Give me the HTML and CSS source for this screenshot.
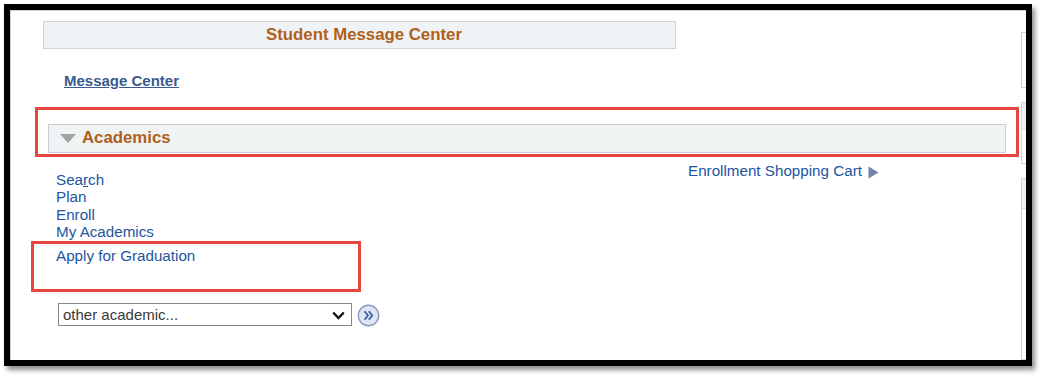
FILE: index.html
```html
<!DOCTYPE html>
<html lang="en">
<head>
<meta charset="utf-8">
<title>Student Center</title>
<link rel="stylesheet" href="styles.css">
</head>
<body>
<div class="frame">
  <div class="page">
    <div class="main">
      <div class="title-bar"><span>Student Message Center</span></div>
      <a class="msg-link" href="#">Message Center</a>
      <div class="acad-bar">
        <span class="tri-down"></span>
        <span class="acad-title">Academics</span>
      </div>
      <div class="acad-body">
        <div class="left-col">
          <ul class="links">
            <li><a href="#">Sea<u>r</u>ch</a></li>
            <li><a href="#">Plan</a></li>
            <li><a href="#">Enroll</a></li>
            <li><a href="#">My Academics</a></li>
          </ul>
          <a class="apply" href="#">Apply for Graduation</a>
          <div class="select-row">
            <div class="select-wrap">
              <select class="other"><option>other academic...</option></select>
              <svg class="chev" width="13" height="9" viewBox="0 0 13 9"><path d="M1.2 1.5 L6.5 7 L11.8 1.5" fill="none" stroke="#111" stroke-width="2.4" stroke-linejoin="miter"/></svg>
            </div>
            <svg class="go" width="23" height="23" viewBox="0 0 23 23">
              <circle cx="11.5" cy="11.5" r="10.2" fill="#dfe5f3" stroke="#8d9cc4" stroke-width="1.4"/>
              <path d="M7.6 7.2 L11 11.5 L7.6 15.8 M11.8 7.2 L15.2 11.5 L11.8 15.8" fill="none" stroke="#3557a5" stroke-width="1.7"/>
            </svg>
          </div>
        </div>
        <div class="right-col">
          <a class="cart" href="#">Enrollment Shopping Cart</a>
          <svg class="tri-right" width="11" height="13" viewBox="0 0 11 13"><path d="M0.5 0.5 L10.5 6.5 L0.5 12.5 Z" fill="#6f86ab"/></svg>
        </div>
      </div>
    </div>
    <div class="side">
      <div class="panel p1"></div>
      <div class="panel p2"><div class="ph h2"></div></div>
      <div class="panel p3"><div class="ph h3"></div></div>
    </div>
  </div>
  <div class="mark mark-acad"></div>
  <div class="mark mark-grad"></div>
</div>
</body>
</html>
```

FILE: styles.css
```css
html, body {
  margin: 0;
  padding: 0;
  background: #ffffff;
}
body {
  font-family: "Liberation Sans", Arial, sans-serif;
  width: 1045px;
  height: 379px;
  overflow: hidden;
}
.frame {
  position: relative;
  box-sizing: border-box;
  width: 1028px;
  height: 362px;
  margin: 4px 0 0 4px;
  border: 6px solid #000;
  background: #fff;
  box-shadow: 3px 4px 5px rgba(0, 0, 0, 0.45);
  overflow: hidden;
}
.page {
  box-sizing: border-box;
  height: 100%;
  border-top: 1px solid #cfcfcf;
  border-left: 1px solid #cfcfcf;
  display: flex;
}
.main {
  width: 1010px;
  flex: none;
  display: flex;
  flex-direction: column;
  align-items: flex-start;
}
.title-bar {
  box-sizing: border-box;
  margin: 10px 0 0 32px;
  width: 633px;
  height: 28px;
  background: #f0f3f5;
  border: 1px solid #cdd3da;
  display: flex;
  align-items: center;
  justify-content: center;
  padding-left: 9px;
  padding-bottom: 1px;
  color: #b0601a;
  font-weight: bold;
  font-size: 16.8px;
}
.msg-link {
  margin: 23px 0 0 53px;
  font-size: 15px;
  line-height: 18px;
  font-weight: bold;
  color: #3a5b8e;
  text-decoration: underline;
}
.acad-bar {
  box-sizing: border-box;
  margin: 34px 0 0 37px;
  width: 958px;
  height: 29px;
  background: #eff3f4;
  border: 1px solid #c9ced4;
  display: flex;
  align-items: center;
  padding-left: 11px;
  padding-bottom: 1px;
}
.tri-down {
  width: 0;
  height: 0;
  border-left: 8px solid transparent;
  border-right: 8px solid transparent;
  border-top: 9px solid #a3a3a3;
  margin-right: 6px;
  margin-top: 1px;
}
.acad-title {
  color: #b0601a;
  font-weight: bold;
  font-size: 16.8px;
}
.acad-body {
  display: flex;
  align-items: flex-start;
  width: 100%;
}
.left-col {
  box-sizing: border-box;
  width: 677px;
  padding-left: 45px;
  padding-top: 18px;
  display: flex;
  flex-direction: column;
  align-items: flex-start;
}
.links {
  list-style: none;
  margin: 0;
  padding: 0;
}
.links li {
  font-size: 15.2px;
  line-height: 17.4px;
}
.links a, .apply, .cart {
  color: #1d55a0;
  text-decoration: none;
}
.links u {
  text-decoration: underline;
}
.apply {
  margin-top: 6.6px;
  font-size: 15.2px;
  line-height: 17.4px;
}
.select-row {
  margin: 38px 0 0 2px;
  display: flex;
  align-items: center;
}
.select-wrap {
  position: relative;
  width: 294px;
  height: 23px;
}
.other {
  box-sizing: border-box;
  width: 294px;
  height: 23px;
  margin: 0;
  padding: 0 0 0 4px;
  border: 1px solid #8a8a8a;
  border-radius: 0;
  background: #fff;
  -webkit-appearance: none;
  appearance: none;
  font-family: "Liberation Sans", Arial, sans-serif;
  font-size: 15px;
  color: #3a3a3a;
}
.chev {
  position: absolute;
  right: 7px;
  top: 8px;
}
.go {
  margin-left: 5px;
  margin-top: 1px;
}
.right-col {
  padding-top: 9px;
  display: flex;
  align-items: center;
}
.cart {
  font-size: 15.2px;
  line-height: 18px;
}
.tri-right {
  margin-left: 6px;
  margin-top: 3px;
}
.side {
  flex: none;
  width: 6px;
  display: flex;
  flex-direction: column;
}
.panel {
  box-sizing: border-box;
  width: 10px;
  border: 1px solid #cdd3da;
  background: #fff;
}
.p1 {
  margin-top: 21px;
  height: 61px;
}
.p2 {
  margin-top: 14px;
  height: 69px;
}
.p3 {
  margin-top: 14px;
  height: 200px;
}
.ph {
  background: #eef1f4;
  border-bottom: 1px solid #d9dde2;
}
.h2 { height: 26px; }
.h3 { height: 29px; }
.mark {
  position: absolute;
  box-sizing: border-box;
  border: 3px solid #e5463e;
}
.mark-acad {
  left: 25px;
  top: 97px;
  width: 984px;
  height: 50px;
}
.mark-grad {
  left: 21px;
  top: 231px;
  width: 330px;
  height: 51px;
}
```
